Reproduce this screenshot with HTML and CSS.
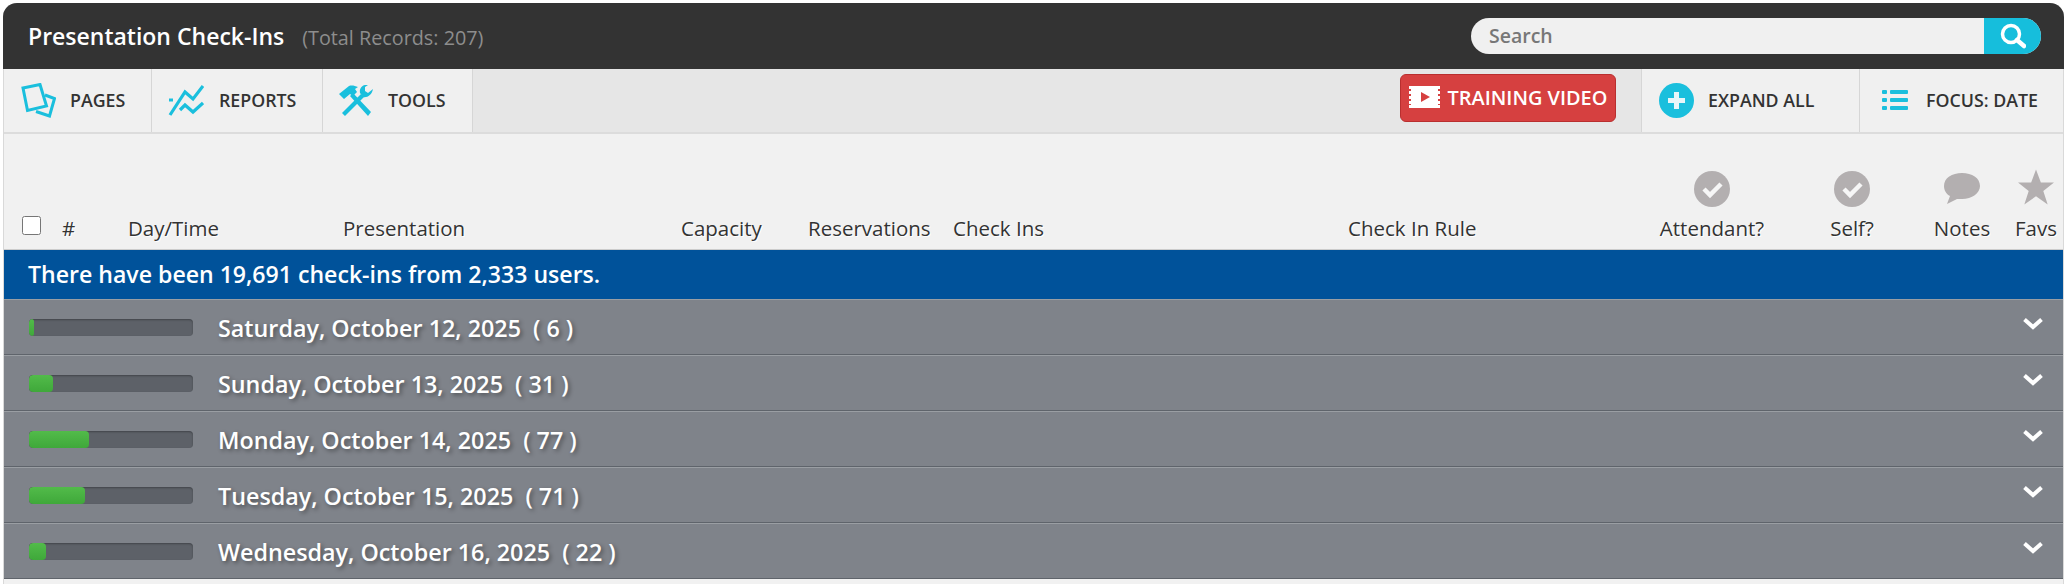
FILE: index.html
```html
<!DOCTYPE html>
<html lang="en">

<head>
    <meta charset="UTF-8">
    <title>Presentation Check-Ins</title>
    <link rel="stylesheet" href="styles.css">
</head>

<body>
    <div class="panel">
        <div class="title-bar">
            <div class="title">Presentation Check-Ins <span class="total">(Total Records: 207)</span></div>
            <div class="search">
                <span class="search-text">Search</span>
                <span class="search-button">
                    <svg width="26" height="26" viewBox="0 0 26 26" fill="none" stroke="#fff">
                        <circle cx="11" cy="11" r="8.500" stroke-width="3.500" />
                        <path d="M17 17l7 6" stroke-width="4.500" stroke-linecap="round" />
                    </svg>
                </span>
            </div>
        </div>

        <div class="toolbar">
            <a class="tool tool-pages">
                <svg width="35" height="35" viewBox="0 0 35 35" fill="none" stroke="#1abfdd" stroke-width="3">
                    <path d="M2 5l17-3.500 6.500 21.500L6.500 27.500z" />
                    <path d="M24 12l9.500 3.500L28.500 33 15 28.500" />
                </svg>
                PAGES
            </a>
            <a class="tool tool-reports">
                <svg width="36" height="31" viewBox="0 0 36 31" fill="none" stroke="#1abfdd" stroke-width="3.200">
                    <path d="M1 15h4M2 30L17 7l8 7L35 1" />
                    <path d="M12 25l5-5 8 7 10-9" />
                </svg>
                REPORTS
            </a>
            <a class="tool tool-tools">
                <svg width="35" height="31" viewBox="0 0 35 31" fill="#1abfdd">
                    <path d="M0 9L10 1c3-1 6 0 9 1l-3 2 2 3-4 4-3-2-6 5z" />
                    <path d="M34 4l-5 4-3-2V2l3-2c-5-1-9 3-8 8l3 4c4 1 9-2 10-8z" />
                    <path d="M11 11l3-3 18 19-3 4zM22 9l3 3L6 31l-3-3z" />
                </svg>
                TOOLS
            </a>
            <div class="toolbar-gap">
                <a class="video-button">
                    <svg width="31" height="22" viewBox="0 0 31 22">
                        <path fill="#fff" d="M0 0h31v3h-2v2h2v3h-2v2h2v3h-2v2h2v3h-2v1h2v3H0v-3h2v-1H0v-3h2v-2H0v-3h2V8H0V5h2V3H0z" />
                        <path fill="#d64040" d="M12 6l9 5-9 5z" />
                    </svg>
                    TRAINING VIDEO
                </a>
            </div>
            <a class="tool tool-expand">
                <svg width="35" height="35" viewBox="0 0 35 35">
                    <circle cx="17.500" cy="17.500" r="17.500" fill="#1abfdd" />
                    <path d="M17.500 9v17M9 17.500h17" stroke="#e8f6f9" stroke-width="5" />
                </svg>
                EXPAND ALL
            </a>
            <a class="tool tool-focus">
                <svg width="26" height="22" viewBox="0 0 26 22" fill="#1abfdd">
                    <rect x="0" y="1" width="5" height="4" rx="1" />
                    <rect x="8" y="1" width="18" height="4" rx="1" />
                    <rect x="0" y="9" width="5" height="4" rx="1" />
                    <rect x="8" y="9" width="18" height="4" rx="1" />
                    <rect x="0" y="17" width="5" height="4" rx="1" />
                    <rect x="8" y="17" width="18" height="4" rx="1" />
                </svg>
                FOCUS: DATE
            </a>
        </div>

        <div class="columns">
            <div class="col col-check"><input type="checkbox"></div>
            <div class="col">#</div>
            <div class="col">Day/Time</div>
            <div class="col">Presentation</div>
            <div class="col">Capacity</div>
            <div class="col">Reservations</div>
            <div class="col">Check Ins</div>
            <div class="col">Check In Rule</div>
            <div class="col col-icon">
                <svg width="36" height="36" viewBox="0 0 36 36">
                    <circle cx="18" cy="18" r="18" fill="#b3afb0" />
                    <path d="M10 18l6 6 11-11" fill="none" stroke="#f6f6f6" stroke-width="4.500" />
                </svg>
                Attendant?
            </div>
            <div class="col col-icon">
                <svg width="36" height="36" viewBox="0 0 36 36">
                    <circle cx="18" cy="18" r="18" fill="#b3afb0" />
                    <path d="M10 18l6 6 11-11" fill="none" stroke="#f6f6f6" stroke-width="4.500" />
                </svg>
                Self?
            </div>
            <div class="col col-icon">
                <svg class="notes-icon" width="36" height="31" viewBox="0 0 36 31">
                    <path fill="#b3afb0" d="M18 0c10 0 18 5 18 13 0 7-8 13-18 13-2 0-4 0-5 0L3 31l3-8c-4-2-6-6-6-10C0 5 8 0 18 0z" />
                </svg>
                Notes
            </div>
            <div class="col col-icon">
                <svg class="favs-icon" width="36" height="36" viewBox="0 0 37 36">
                    <path fill="#b3afb0" d="M18.500 0l5 13.500H37L26 22l4.500 14-12-8.500-12 8.500L11 22 0 13.500h13.500z" />
                </svg>
                Favs
            </div>
        </div>

        <div class="summary">There have been 19,691 check-ins from 2,333 users.</div>

        <div class="day-row">
            <div class="bar"><div class="bar-fill" style="width: 3%"></div></div>
            <div class="day-label">Saturday, October 12, 2025 &nbsp;( 6 )</div>
            <svg class="chevron" width="22" height="13" viewBox="0 0 22 13"><path d="M2.500 2.500L11 10l8.500-7.500" /></svg>
        </div>
        <div class="day-row">
            <div class="bar"><div class="bar-fill" style="width: 14.5%"></div></div>
            <div class="day-label">Sunday, October 13, 2025 &nbsp;( 31 )</div>
            <svg class="chevron" width="22" height="13" viewBox="0 0 22 13"><path d="M2.500 2.500L11 10l8.500-7.500" /></svg>
        </div>
        <div class="day-row">
            <div class="bar"><div class="bar-fill" style="width: 36.6%"></div></div>
            <div class="day-label">Monday, October 14, 2025 &nbsp;( 77 )</div>
            <svg class="chevron" width="22" height="13" viewBox="0 0 22 13"><path d="M2.500 2.500L11 10l8.500-7.500" /></svg>
        </div>
        <div class="day-row">
            <div class="bar"><div class="bar-fill" style="width: 34%"></div></div>
            <div class="day-label">Tuesday, October 15, 2025 &nbsp;( 71 )</div>
            <svg class="chevron" width="22" height="13" viewBox="0 0 22 13"><path d="M2.500 2.500L11 10l8.500-7.500" /></svg>
        </div>
        <div class="day-row">
            <div class="bar"><div class="bar-fill" style="width: 10.3%"></div></div>
            <div class="day-label">Wednesday, October 16, 2025 &nbsp;( 22 )</div>
            <svg class="chevron" width="22" height="13" viewBox="0 0 22 13"><path d="M2.500 2.500L11 10l8.500-7.500" /></svg>
        </div>
    </div>
</body>

</html>
```

FILE: styles.css
```css
* {
    margin: 0;
    padding: 0;
    box-sizing: border-box;
}

body {
    font-family: 'Open Sans', sans-serif;
    background-color: #fff;
    color: #333;
    padding: 3px 3px 0;
}

.panel {
    background-color: #f1f1f1;
    border-left: 1px solid #d9d9d9;
    border-right: 1px solid #d9d9d9;
    border-radius: 14px 14px 0 0;
    padding-bottom: 5px;
}

.title-bar {
    height: 66px;
    background-color: #333;
    border-radius: 14px 14px 0 0;
    margin: 0 -1px;
    display: flex;
    align-items: center;
    justify-content: space-between;
    padding: 0 23px 0 25px;
}

.title {
    color: #fff;
    font-size: 23px;
    font-weight: 600;
}

.total {
    color: #8d8d8d;
    font-size: 19.8px;
    font-weight: 400;
    margin-left: 12px;
}

.search {
    width: 570px;
    height: 36px;
    background-color: #f0f0f0;
    border-radius: 18px;
    display: flex;
    align-items: center;
    justify-content: space-between;
    overflow: hidden;
    padding-left: 18px;
}

.search-text {
    color: #777;
    font-size: 19.500px;
    font-weight: 600;
    padding-bottom: 2px;
}

.search-button {
    width: 57px;
    height: 36px;
    background-color: #16bedc;
    display: flex;
    align-items: center;
    justify-content: center;
}

.toolbar {
    height: 65px;
    display: flex;
    background-color: #e6e6e6;
    border-bottom: 2px solid #dcdcdc;
}

.tool {
    display: flex;
    align-items: center;
    background-color: #f0f0f0;
    border-right: 1px solid #d6d6d6;
    font-size: 17.8px;
    font-weight: 600;
    color: #333;
    padding-bottom: 1px;
}

.tool svg {
    flex: none;
}

.tool-pages {
    width: 148px;
    padding-left: 17px;
    gap: 14px;
}

.tool-reports {
    width: 171px;
    padding-left: 16px;
    gap: 15px;
}

.tool-tools {
    width: 150px;
    padding-left: 16px;
    gap: 14px;
}

.toolbar-gap {
    flex: 1;
    display: flex;
    justify-content: flex-end;
    padding: 5px 25px 0 0;
}

.video-button {
    width: 216px;
    height: 48px;
    background-color: #d64040;
    border: 1px solid #b92f2f;
    border-radius: 6px;
    color: #fff;
    font-size: 19.9px;
    font-weight: 600;
    display: flex;
    align-items: center;
    justify-content: center;
    gap: 8px;
    white-space: nowrap;
    padding-bottom: 2px;
}

.video-button svg {
    flex: none;
}

.tool-expand {
    width: 219px;
    padding-left: 17px;
    gap: 14px;
    border-left: 1px solid #d6d6d6;
}

.tool-focus {
    width: 203px;
    padding-left: 22px;
    gap: 18px;
    border-right: none;
}

.columns {
    height: 116px;
    display: grid;
    grid-template-columns: 58px 66px 215px 338px 127px 145px 395px 284px 160px 120px 100px 48px;
    align-items: end;
    padding-bottom: 7px;
    border-bottom: 1px solid #ccc;
    font-size: 20.5px;
    color: #333;
    text-shadow: 1px 1px 0 #fff;
}

.col {
    white-space: nowrap;
}

.col-check {
    padding: 0 0 7px 18px;
}

.col-check input {
    width: 19px;
    height: 19px;
    display: block;
}

.col-icon {
    display: flex;
    flex-direction: column;
    align-items: center;
    gap: 7px;
}

.notes-icon {
    margin-bottom: 3px;
}

.favs-icon {
    margin-bottom: 2px;
}

.summary {
    height: 49px;
    background-color: #00529a;
    color: #fff;
    font-size: 23.100px;
    font-weight: 600;
    display: flex;
    align-items: center;
    padding: 0 0 2px 24px;
}

.day-row {
    height: 56px;
    background-color: #7f838a;
    border-top: 1px solid #9a9ea3;
    border-bottom: 1px solid #5f646b;
    display: flex;
    align-items: center;
    padding: 0 19px 0 25px;
    color: #fff;
}

.bar {
    width: 164px;
    height: 17px;
    background-color: #5d6168;
    border-radius: 4px;
    overflow: hidden;
    box-shadow: inset 0 1px 2px rgba(0, 0, 0, 0.3);
}

.bar-fill {
    height: 100%;
    background: linear-gradient(#52bb4a, #3fa83a);
    border-radius: 4px;
}

.day-label {
    margin-left: 25px;
    flex: 1;
    font-size: 23.300px;
    font-weight: 600;
    padding-top: 2px;
    text-shadow: 2px 2px 4px rgba(0, 0, 0, 0.4);
}

.chevron {
    fill: none;
    stroke: #fff;
    stroke-width: 4;
    margin-top: -8px;
}
```
